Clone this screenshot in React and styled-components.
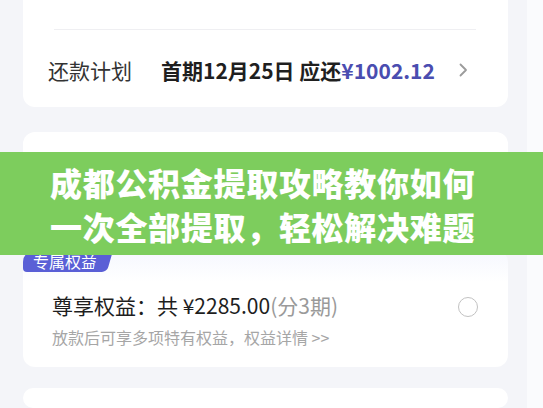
import React from "react";
import styled, { createGlobalStyle } from "styled-components";

const GlobalStyle = createGlobalStyle`
     html, body {
          margin: 0;
          padding: 0;
     }
     body {
          width: 543px;
          height: 408px;
          overflow: hidden;
          font-family: "Noto Sans CJK SC", "Noto Sans", "Liberation Sans", sans-serif;
          background: linear-gradient(to right, #f4f5f9 0, #f4f5f9 527px, #fafbfd 527px);
     }
`;

const Page = styled.div`
     position: relative;
     display: flex;
     flex-direction: column;
     padding: 0 35px 0 23px;
`;

const Card = styled.div`
     background: ${(props) => props.$tint ? "linear-gradient(#f5f7fe, #ffffff 32px)" : "#ffffff"};
     border-radius: ${(props) => props.$flatTop ? "0 0 12px 12px" : "12px"};
     height: ${(props) => props.$h}px;
     margin-top: ${(props) => props.$mt || 0}px;
     display: flex;
     flex-direction: column;
     flex-shrink: 0;
`;

const TopRow = styled.div`
     height: 31px;
     border-bottom: 1px solid #efeff2;
     margin: 0 32px 0 31px;
     box-sizing: border-box;
`;

const PlanRow = styled.div`
     display: flex;
     align-items: center;
     height: 76px;
     padding: 2px 40px 0 25px;
     font-size: 21px;
`;

const Label = styled.span`
     color: #333;
     width: 84px;
     margin-right: 29px;
`;

const Strong = styled.span`
     color: #1f1f1f;
     font-weight: 700;
`;

const Amount = styled.span`
     color: #4a4db0;
     font-weight: 700;
`;

const Chevron = styled.svg`
     margin-left: auto;
     width: 9px;
     height: 14px;
`;

const Banner = styled.div`
     position: absolute;
     top: 152px;
     left: 0;
     width: 543px;
     height: 103px;
     box-sizing: border-box;
     padding: 8px 0 0 50px;
     background: #7dcd5d;
     color: #ffffff;
     font-size: 32px;
     font-weight: 900;
     line-height: 44px;
     letter-spacing: 0.7px;
     z-index: 5;
`;

const Badge = styled.div`
     position: relative;
     align-self: flex-start;
     height: 22px;
     padding: 0 4px 0 10px;
     background: #5a5fd6;
     color: #ffffff;
     font-size: 16px;
     line-height: 22px;
     border-radius: 12px 0 0 4px;

     &::after {
          content: "";
          position: absolute;
          top: 0;
          right: -9px;
          width: 14px;
          height: 22px;
          background: #5a5fd6;
          border-radius: 0 5px 5px 0;
          transform: skewX(-16deg);
     }
`;

const BenefitRow = styled.div`
     display: flex;
     align-items: flex-start;
     padding: 18px 30px 0 29px;
`;

const BenefitText = styled.div`
     display: flex;
     flex-direction: column;
     gap: 5px;
`;

const BenefitTitle = styled.div`
     font-size: 21px;
     line-height: 30px;
     color: #1e1e1e;
`;

const Muted = styled.span`
     color: #9a9a9a;
`;

const BenefitSub = styled.div`
     font-size: 16px;
     line-height: 24px;
     color: #a6a6a6;
`;

const Radio = styled.div`
     margin-left: auto;
     margin-top: 7px;
     width: 18px;
     height: 18px;
     border: 1.7px solid #c2c2c2;
     border-radius: 50%;
     flex-shrink: 0;
`;

export default function App() {
     return (
          <>
               <GlobalStyle />
               <Page>
                    <Card $h={107} $flatTop>
                         <TopRow />
                         <PlanRow>
                              <Label>还款计划</Label>
                              <Strong>首期12月25日 应还</Strong>
                              <Amount>¥1002.12</Amount>
                              <Chevron viewBox="0 0 9 14">
                                   <path d="M1.5 1.5 L7 7 L1.5 12.5" fill="none" stroke="#9b9b9b" strokeWidth="1.8" strokeLinecap="round" strokeLinejoin="round" />
                              </Chevron>
                         </PlanRow>
                    </Card>

                    <Card $h={108} $mt={25} />

                    <Card $h={117} $mt={10} $tint>
                         <Badge>专属权益</Badge>
                         <BenefitRow>
                              <BenefitText>
                                   <BenefitTitle>
                                        尊享权益：共 ¥2285.00<Muted>(分3期)</Muted>
                                   </BenefitTitle>
                                   <BenefitSub>放款后可享多项特有权益，权益详情 &gt;&gt;</BenefitSub>
                              </BenefitText>
                              <Radio />
                         </BenefitRow>
                    </Card>

                    <Card $h={20} $mt={21} />

                    <Banner>
                         成都公积金提取攻略教你如何
                         <br />
                         一次全部提取，轻松解决难题
                    </Banner>
               </Page>
          </>
     );
}
